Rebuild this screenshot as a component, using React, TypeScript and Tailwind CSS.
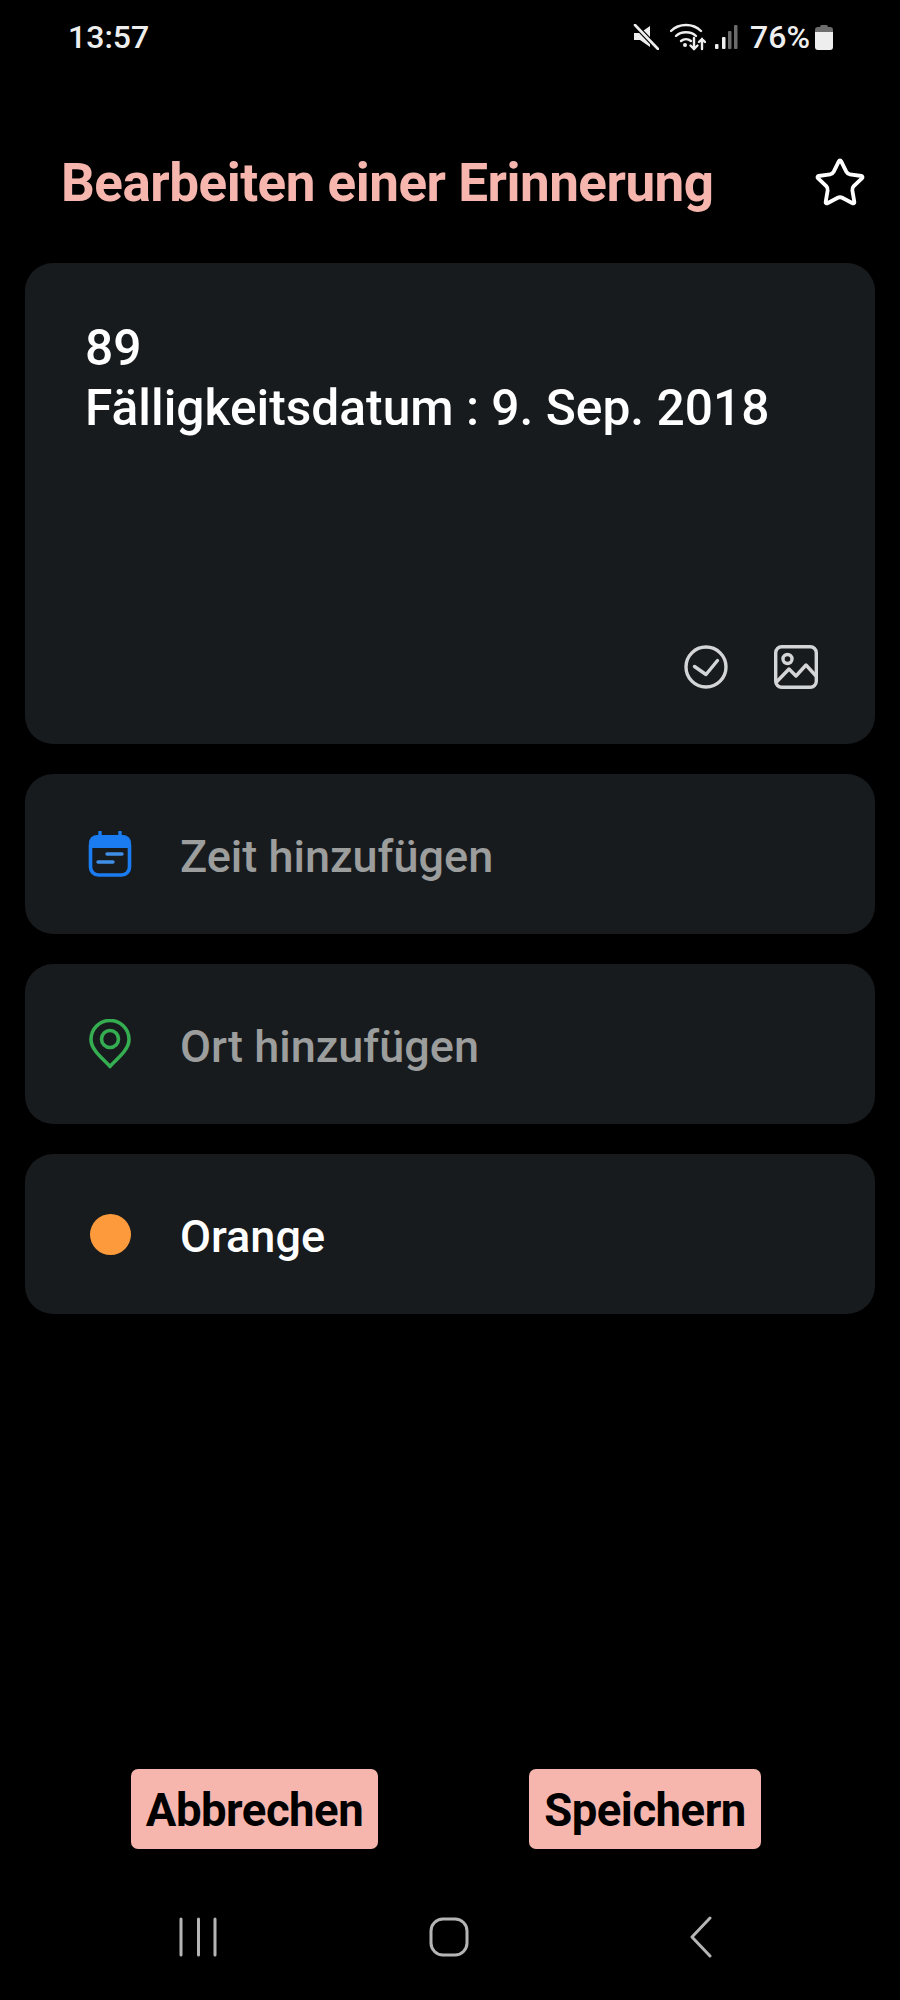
import { Star } from "lucide-react";

function StatusIcons() {
  return (
    <div className="flex items-center">
      {/* mute */}
      <svg width="26" height="26" viewBox="0 0 26 26" className="mr-[11px]">
        <path d="M1 9h6l10-7v21l-10-7H1z" fill="#eeeeee" />
        <path d="M2 1l23 24" stroke="#000" strokeWidth="5" />
        <path d="M2 1l23 24" stroke="#eeeeee" strokeWidth="2.6" strokeLinecap="round" />
      </svg>
      {/* wifi */}
      <svg width="36" height="28" viewBox="0 0 36 28" className="mr-[8px]">
        <g fill="none" stroke="#eeeeee" strokeWidth="2.4" strokeLinecap="round">
          <path d="M1 8c8-8 22-8 30 0" />
          <path d="M6 13c5-5 15-5 20 0" />
          <path d="M11 18c3-2.500 7-2.500 10 0" />
          <path d="M24 15v11M20.500 22.500l3.500 3.500 3.500-3.500" />
          <path d="M32 26v-10M29 19l3-3 3 3" />
        </g>
        <circle cx="15" cy="22" r="2" fill="#eeeeee" />
      </svg>
      {/* signal */}
      <svg width="24" height="26" viewBox="0 0 24 26" className="mr-[12px]">
        <rect x="1" y="20" width="3.500" height="5" rx="1" fill="#eeeeee" />
        <rect x="8" y="13" width="3.500" height="12" rx="1" fill="#eeeeee" />
        <rect x="14" y="7" width="3.500" height="18" rx="1" fill="#6b6b6b" />
        <rect x="20" y="1" width="3.500" height="24" rx="1" fill="#6b6b6b" />
      </svg>
      <span className="text-[32px] leading-none font-medium text-[#eeeeee]">76%</span>
      {/* battery */}
      <svg width="18" height="26" viewBox="0 0 18 26" className="ml-[5px]">
        <path d="M5 3a2 2 0 0 1 2-2h4a2 2 0 0 1 2 2h2a3 3 0 0 1 3 3v3H0V6a3 3 0 0 1 3-3z" fill="#6e6e6e" />
        <path d="M0 8h18v15a3 3 0 0 1-3 3H3a3 3 0 0 1-3-3z" fill="#eeeeee" />
      </svg>
    </div>
  );
}

function CalendarIcon() {
  return (
    <svg width="44" height="46" viewBox="0 0 44 46">
      <path d="M12 1v6M32 1v6" stroke="#1a7cf0" strokeWidth="3.400" strokeLinecap="round" />
      <path d="M9 4h26a8 8 0 0 1 8 8v5H1v-5a8 8 0 0 1 8-8z" fill="#1a7cf0" />
      <rect x="2.500" y="6" width="39" height="38" rx="8" fill="none" stroke="#1a7cf0" strokeWidth="3.600" />
      <path d="M19 23h15M10 31h15" stroke="#3f8fe8" strokeWidth="3.400" strokeLinecap="round" />
    </svg>
  );
}

function PinIcon() {
  return (
    <svg width="42" height="50" viewBox="0 0 42 50" fill="none" stroke="#35ae52" strokeWidth="3.600">
      <path d="M21 47.500C17 42 2 32 2 20.500a19 19 0 0 1 38 0C40 32 25 42 21 47.500z" strokeLinejoin="round" />
      <circle cx="21" cy="20" r="8.500" />
    </svg>
  );
}

type RowProps = {
  icon: React.ReactNode;
  label: string;
  muted?: boolean;
};

function Row({ icon, label, muted }: RowProps) {
  return (
    <div className="flex h-[160px] items-center rounded-[28px] bg-[#171b1e] pl-[62px]">
      <div className="flex w-[46px] items-center justify-center">{icon}</div>
      <span
        className={[
          "ml-[47px] pt-[5px] text-[45px] leading-none font-medium",
          muted ? "text-[#9c9d9d]" : "text-white",
        ].join(" ")}
      >
        {label}
      </span>
    </div>
  );
}

export default function App() {
  return (
    <div className="flex h-[2000px] w-[900px] flex-col overflow-hidden bg-black font-['Roboto',sans-serif]">
      {/* status bar */}
      <div className="flex h-[74px] items-center justify-between pr-[67px] pl-[68px]">
        <span className="text-[32px] leading-none font-medium text-[#eeeeee]">13:57</span>
        <StatusIcons />
      </div>

      {/* header */}
      <div className="flex h-[189px] items-center justify-between pt-[29px] pr-[33px] pl-[61px]">
        <h1 className="text-[53px] leading-none font-bold tracking-[-0.5px] text-[#f6b6ae]">
          Bearbeiten einer Erinnerung
        </h1>
        <Star className="h-[54px] w-[54px] text-white" strokeWidth={1.7} />
      </div>

      {/* cards */}
      <div className="flex flex-col gap-[30px] px-[25px]">
        <div className="flex h-[481px] flex-col justify-between rounded-[28px] bg-[#171b1e] pt-[55px] pr-[57px] pb-[55px] pl-[60px]">
          <p className="text-[49.7px] leading-[60px] font-medium text-white">
            89
            <br />
            Fälligkeitsdatum : 9. Sep. 2018
          </p>
          <div className="flex justify-end gap-[46px]">
            <svg width="44" height="44" viewBox="0 0 44 44" fill="none" stroke="#d4d5d6" strokeWidth="3.400">
              <circle cx="22" cy="22" r="20" />
              <path d="M10.500 21.500L22 29.500l11.500-14" strokeLinecap="round" strokeLinejoin="round" />
            </svg>
            <svg width="44" height="44" viewBox="0 0 44 44" fill="none" stroke="#d4d5d6" strokeWidth="3.400">
              <rect x="1.700" y="1.700" width="40.600" height="40.600" rx="6" />
              <circle cx="13.500" cy="14" r="4.500" />
              <path d="M2 37.500L15 24l7 7 10-11 10 11" strokeLinejoin="round" />
            </svg>
          </div>
        </div>

        <Row icon={<CalendarIcon />} label="Zeit hinzufügen" muted />
        <Row icon={<PinIcon />} label="Ort hinzufügen" muted />
        <Row
          icon={<div className="h-[41px] w-[41px] rounded-full bg-[#fd9a3c]" />}
          label="Orange"
        />
      </div>

      {/* buttons */}
      <div className="mt-[455px] flex justify-between pr-[139px] pl-[131px]">
        <button className="flex h-[80px] w-[247px] items-center justify-center rounded-[7px] bg-[#f6b6ae] pt-[4px] text-[45.5px] font-bold tracking-[-0.5px] text-black">
          Abbrechen
        </button>
        <button className="flex h-[80px] w-[232px] items-center justify-center rounded-[7px] bg-[#f6b6ae] pt-[4px] text-[45.5px] font-bold tracking-[-0.5px] text-black">
          Speichern
        </button>
      </div>

      {/* nav bar */}
      <div className="mt-[67px] flex items-center pl-[179px]">
        <svg width="40" height="40" viewBox="0 0 40 40" stroke="#b5b5b5" strokeWidth="3" strokeLinecap="round">
          <path d="M2 2v36M19.500 2v36M36 2v36" />
        </svg>
        <svg width="40" height="40" viewBox="0 0 40 40" fill="none" stroke="#b5b5b5" strokeWidth="3" className="ml-[210px]">
          <rect x="2" y="2" width="36" height="36" rx="12" />
        </svg>
        <svg width="26" height="42" viewBox="0 0 26 42" fill="none" stroke="#b5b5b5" strokeWidth="3" strokeLinecap="round" strokeLinejoin="round" className="ml-[219px]">
          <path d="M22 2L4 21l18 19" />
        </svg>
      </div>
    </div>
  );
}
